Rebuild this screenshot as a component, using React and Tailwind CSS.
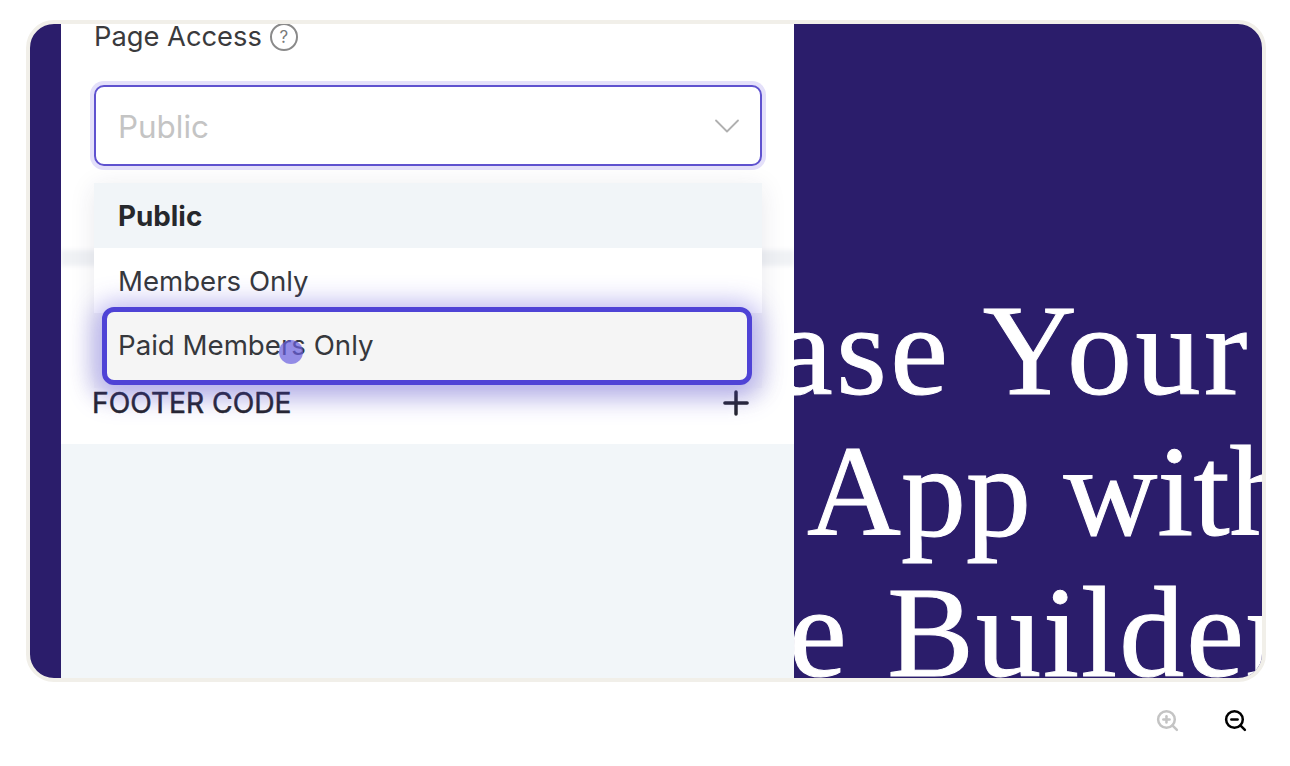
import { ChevronDown, Plus, ZoomIn, ZoomOut } from 'lucide-react'

const sans = "font-['Inter','Liberation_Sans',sans-serif]"

export default function App() {
  return (
    <div className={`h-[766px] w-[1290px] overflow-hidden bg-white ${sans}`}>

      {/* Video frame */}
      <div className="mx-[26px] mt-5 flex h-[662px] w-[1240px] overflow-hidden rounded-[28px] border-4 border-[#f1efe9] bg-[#2b1d6b]">
        <div className="w-[31px] shrink-0" />

        {/* Settings panel */}
        <div className="relative z-10 flex w-[733px] shrink-0 flex-col overflow-hidden bg-[#f2f6f9]">
          <div className="relative h-[420px] bg-white pl-[33px] pr-8">
            {/* Section divider showing behind the open menu */}
            <div className="absolute inset-x-0 top-[226px] h-4 bg-[#f0f2f5] blur-[2px]" />

            <div className="flex h-[26px] items-center gap-2 text-[#3a3a3c]">
              <span className="text-[27.3px] leading-none">Page Access</span>
              <HelpIcon />
            </div>

            {/* Select */}
            <div className="relative mt-[35px] flex h-[81px] w-[668px] items-center justify-between rounded-[10px] border-2 border-[#5f52cf] bg-white pl-[22px] pr-[11px] shadow-[0_0_0_4px_#e4e0fa]">
              <span className="pt-1 text-[31.4px] text-[#c4c4c4]">Public</span>
              <ChevronDown size={44} strokeWidth={1} className="text-[#b0b0b0]" />
            </div>

            {/* Options */}
            <div className="relative z-10 mt-[17px] w-[668px] bg-white shadow-[0_4px_24px_rgba(40,40,80,0.1)]">
              <div className="flex h-[65px] items-center bg-[#f1f5f8] pl-[24px] pt-[2px] text-[27.8px] font-bold text-[#26282c]">Public</div>
              <div className="flex h-[65px] items-center pl-[24px] pt-[2px] text-[27.6px] text-[#36383c]">Members Only</div>
              <div className="flex h-[75px] items-start bg-[#f3f3f6]">
                <div className="relative -mt-[6px] ml-2 flex h-[78px] w-[650px] items-center rounded-[12px] border-[5px] border-[#4f43d6] bg-[#f5f5f5] pl-[11px] text-[27.65px] text-[#36383c] shadow-[0_4px_26px_8px_rgba(79,67,214,0.4)]">
                  Paid Members Only
                  <span className="absolute left-[172px] top-[28px] h-6 w-6 rounded-full bg-[#6a5fe0]/70" />
                </div>
              </div>
            </div>

            {/* Collapsed section */}
            <div className="relative -mt-[5px] flex h-10 items-center justify-between pr-[7px] text-[28.2px] font-normal text-[#26262e]">
              <span className="-ml-[2px] [-webkit-text-stroke:0.5px_#26262e]">FOOTER CODE</span>
              <Plus size={38} strokeWidth={2.2} />
            </div>
          </div>
        </div>

        {/* Headline, cropped by the frame */}
        <div className="min-w-0 flex-1 overflow-hidden font-['Liberation_Serif',serif] text-[130px] leading-[141px] whitespace-nowrap text-white [-webkit-text-stroke:1px_white]">
          <div className="mt-[256px] -ml-[19px] tracking-[3.5px]">ase Your</div>
          <div className="ml-[13px]">App with</div>
          <div className="-ml-[5px] tracking-[2px] [word-spacing:4px]">e Builder</div>
        </div>
      </div>

      {/* Player controls */}
      <div className="mt-[26px] flex justify-end gap-[43px] pr-[42px]">
        <ZoomIn size={25} strokeWidth={2.4} className="text-[#c4c4c4]" />
        <ZoomOut size={25} strokeWidth={2.4} className="text-black" />
      </div>
    </div>
  )
}

function HelpIcon() {
  return (
    <span className="flex h-[28px] w-[28px] items-center justify-center rounded-full border-2 border-[#8a8a8a] text-[17px] leading-none text-[#7a7a7a]">
      ?
    </span>
  )
}
